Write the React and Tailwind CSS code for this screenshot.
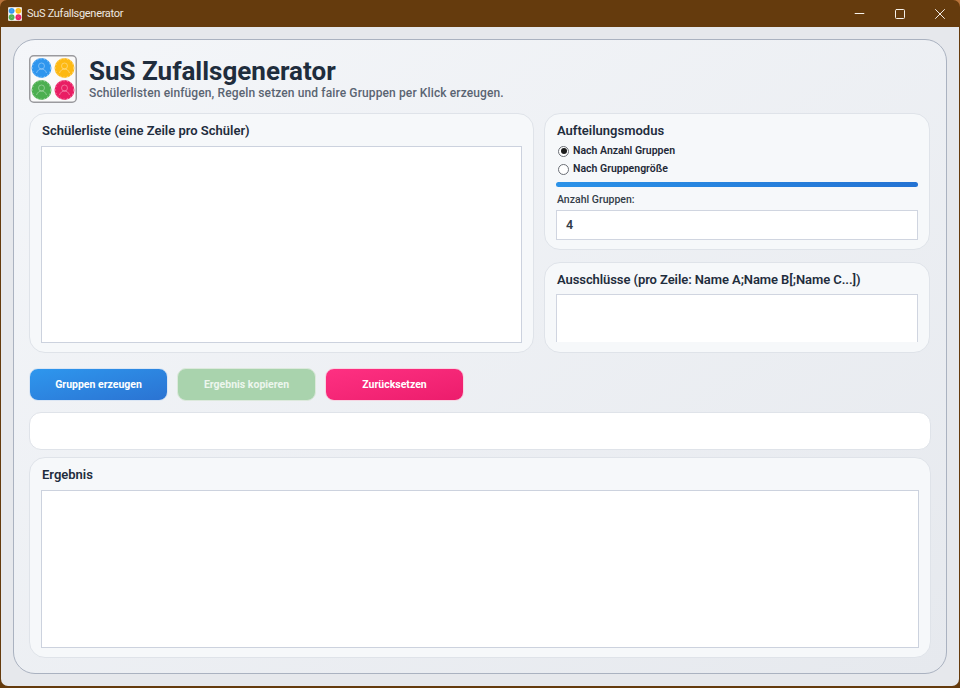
import React from "react"
import { Minus, Square, X } from "lucide-react"

const font = { fontFamily: '"Roboto", "Liberation Sans", sans-serif' }

function Coin({ cx, cy, color }) {
  return (
    <g>
      <circle cx={cx} cy={cy} r="10" fill={color} />
      <circle cx={cx} cy={cy} r="9.2" fill="none" stroke="#fff" strokeOpacity="0.45" strokeWidth="1" strokeDasharray="1.5 2" />
      <circle cx={cx} cy={cy - 2} r="3" fill="none" stroke="#fff" strokeOpacity="0.35" strokeWidth="1" />
      <path d={`M${cx - 5} ${cy + 5}c1-3 3-4 5-4s4 1 5 4`} fill="none" stroke="#fff" strokeOpacity="0.35" strokeWidth="1" />
    </g>
  )
}

function Logo({ size = 48, small }) {
  return (
    <svg width={size} height={size} viewBox="0 0 48 48" className="shrink-0">
      <rect x="0.75" y="0.75" width="46.5" height="46.5" rx="4" fill={small ? "#ffffff" : "#fafafa"} stroke={small ? "#ffffff" : "#9a9a9e"} strokeWidth="1.5" />
      <Coin cx={12.5} cy={13} color="#2f96ee" />
      <Coin cx={35.5} cy={13} color="#fdb913" />
      <Coin cx={12.5} cy={35} color="#4caf50" />
      <Coin cx={35.5} cy={35} color="#e91e63" />
    </svg>
  )
}

function Radio({ checked, label }) {
  return (
    <div className="flex items-center gap-[4px] h-[18px] pl-[2px]">
      <span className="w-[11px] h-[11px] rounded-full border border-[#6b6f76] bg-white flex items-center justify-center">
        {checked && <span className="w-[6px] h-[6px] rounded-full bg-[#1c1c1c]" />}
      </span>
      <span className="text-[10.5px] font-semibold text-[#1f2937] leading-none">{label}</span>
    </div>
  )
}

export default function App() {
  return (
    <div className="w-[960px] h-[688px] bg-[#653b0d] flex flex-col overflow-hidden" style={font}>
      {/* Title bar */}
      <div className="shrink-0 bg-[#b9733a]">
        <div className="h-[27px] flex items-center bg-[#653b0d] rounded-t-[7px]">
          <div className="ml-[8px]">
            <Logo size={14} small />
          </div>
          <span className="ml-[5px] pt-[2px] text-[11px] tracking-[-0.3px] text-[#eee8e0]">SuS Zufallsgenerator</span>
          <div className="ml-auto flex items-center text-[#f6f1ea] pr-[0.5px]">
            <div className="w-[40px] flex justify-center">
              <Minus size={15} strokeWidth={1.6} />
            </div>
            <div className="w-[40px] flex justify-center">
              <Square size={12} strokeWidth={2} />
            </div>
            <div className="w-[40px] flex justify-center">
              <X size={18} strokeWidth={1.3} />
            </div>
          </div>
        </div>
      </div>

      {/* Window body */}
      <div className="h-[659px] mx-[1px] bg-[#e6e8ec] rounded-b-[7px] pt-[12px] px-[12px]">
        <div className="h-[635px] rounded-[22px] border border-[#aab2c0] bg-gradient-to-br from-[#f4f6f9] to-[#e6e9ee] px-[15px] pt-[14px] flex flex-col">
          {/* Header */}
          <div className="flex items-center gap-[12px] h-[49px] mb-[10px]">
            <Logo />
            <div className="flex flex-col">
              <h1 className="text-[26px] leading-[30px] font-bold text-[#1f2d3d]">SuS Zufallsgenerator</h1>
              <p className="text-[12px] tracking-[0.12px] leading-[15px] font-medium text-[#5a6472]">
                Schülerlisten einfügen, Regeln setzen und faire Gruppen per Klick erzeugen.
              </p>
            </div>
          </div>

          {/* Input panels */}
          <div className="flex gap-[10px] h-[240px] shrink-0">
            <section className="w-[505px] rounded-[16px] border border-[#dfe3e9] bg-[#f6f8fa] px-[11px] pt-[8px]">
              <h2 className="pl-[1px] text-[13px] leading-[17px] font-semibold text-[#1f2d3d] mb-[7px]">Schülerliste (eine Zeile pro Schüler)</h2>
              <div className="h-[197px] border border-[#ccd2de] bg-white" />
            </section>

            <div className="w-[386px] flex flex-col gap-[12px]">
              <section className="h-[137px] rounded-[16px] border border-[#dfe3e9] bg-[#f6f8fa] px-[11px] pt-[8px]">
                <h2 className="pl-[1px] text-[13px] leading-[17px] font-semibold text-[#1f2d3d] mb-[3px]">Aufteilungsmodus</h2>
                <Radio checked label="Nach Anzahl Gruppen" />
                <Radio label="Nach Gruppengröße" />
                <div className="h-[5px] rounded-full bg-gradient-to-r from-[#2b92e8] to-[#2473d3] mt-[4px] mb-[6px]" />
                <div className="pl-[1px] text-[10.5px] leading-[14px] font-medium text-[#333c48] mb-[3px]">Anzahl Gruppen:</div>
                <div className="h-[30px] border border-[#d0d5e0] bg-white flex items-center pl-[9px] text-[12.5px] font-semibold text-[#333c48]">4</div>
              </section>

              <section className="h-[91px] rounded-[16px] border border-[#dfe3e9] bg-[#f6f8fa] px-[11px] pt-[8px]">
                <h2 className="pl-[1px] text-[13px] tracking-[-0.08px] leading-[17px] font-semibold text-[#1f2d3d] mb-[6px]">Ausschlüsse (pro Zeile: Name A;Name B[;Name C...])</h2>
                <div className="h-[48px] border-x border-t border-[#d0d5e0] bg-white" />
              </section>
            </div>
          </div>

          {/* Actions */}
          <div className="flex gap-[9px] mt-[15px] mb-[11px]">
            <button className="w-[139px] h-[33px] rounded-[9px] border border-[#dbe6f4] bg-gradient-to-br from-[#2e97ee] to-[#2b73d2] text-[10.5px] font-bold text-white">Gruppen erzeugen</button>
            <button className="w-[139px] h-[33px] rounded-[9px] border border-[#dce9dc] bg-[#a9d3ad] text-[10.5px] font-bold text-[#edf6ee]">Ergebnis kopieren</button>
            <button className="w-[139px] h-[33px] rounded-[9px] border border-[#f6d5e2] bg-gradient-to-br from-[#fe3082] to-[#ec1c6c] text-[10.5px] font-bold text-white">Zurücksetzen</button>
          </div>

          {/* Status */}
          <div className="h-[38px] rounded-[12px] border border-[#dfe3e9] bg-white mb-[7px] shrink-0" />

          {/* Result */}
          <section className="h-[201px] rounded-[16px] border border-[#dfe3e9] bg-[#f6f8fa] px-[11px] pt-[8px] shrink-0">
            <h2 className="pl-[1px] text-[13px] leading-[17px] font-semibold text-[#1f2d3d] mb-[7px]">Ergebnis</h2>
            <div className="h-[158px] border border-[#ccd2de] bg-white" />
          </section>
        </div>
      </div>
    </div>
  )
}
